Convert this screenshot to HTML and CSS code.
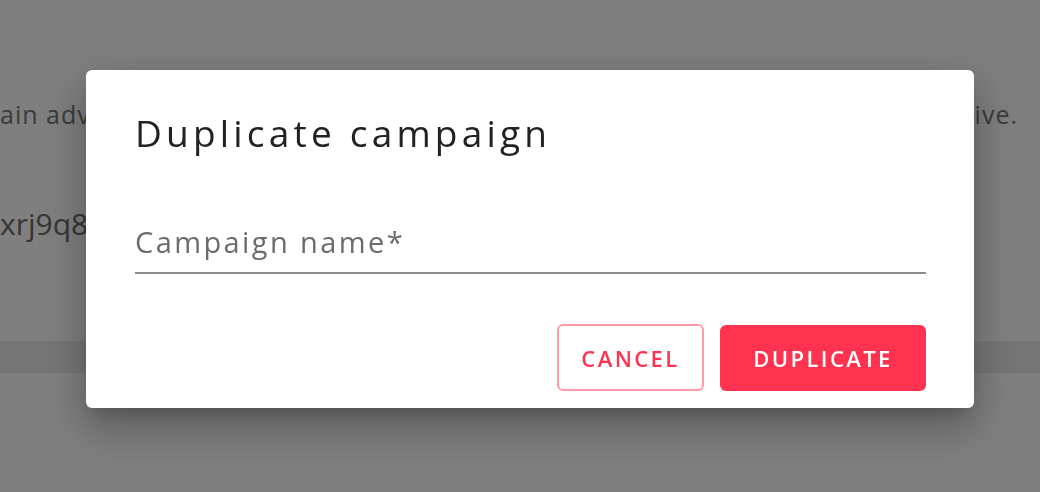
FILE: index.html
```html
<!DOCTYPE html>
<html lang="en">
<head>
<meta charset="utf-8">
<title>Duplicate campaign</title>
<link rel="stylesheet" href="styles.css">
</head>
<body>
<div class="page">
  <div class="row row-desc">
    <span>ain adv</span>
    <span>tive.</span>
  </div>
  <div class="row row-id">
    <span>xrj9q8</span>
  </div>
  <div class="band"></div>
</div>
<div class="overlay"></div>
<div class="dialog" role="dialog">
  <h2 class="dialog-title">Duplicate campaign</h2>
  <div class="field">
    <label class="field-label">Campaign name*</label>
    <div class="field-line"></div>
  </div>
  <div class="actions">
    <button class="btn btn-outline">CANCEL</button>
    <button class="btn btn-fill">DUPLICATE</button>
  </div>
</div>
</body>
</html>
```
FILE: styles.css
```css
* { box-sizing: border-box; }
html, body {
  margin: 0;
  padding: 0;
  width: 1040px;
  height: 492px;
  overflow: hidden;
  background: #ffffff;
  font-family: "Open Sans", "Noto Sans", sans-serif;
}
.page {
  padding-top: 94px;
}
.row {
  display: flex;
  justify-content: space-between;
  color: #777;
}
.row-desc {
  font-size: 25px;
  line-height: 40px;
  padding-right: 22px;
  letter-spacing: 1px;
}
.row-id {
  margin-top: 68px;
  font-size: 30px;
  line-height: 44px;
  color: #6c6c6c;
}
.band {
  margin-top: 95px;
  height: 32px;
  background: #ededed;
}
.overlay {
  position: fixed;
  inset: 0;
  background: rgba(0, 0, 0, 0.5);
}
.dialog {
  position: absolute;
  left: 86px;
  top: 70px;
  width: 888px;
  height: 338px;
  background: #fff;
  border-radius: 6px;
  padding: 0 48px 0 49px;
  box-shadow: 0 11px 15px -7px rgba(0,0,0,0.2), 0 24px 38px 3px rgba(0,0,0,0.14), 0 9px 46px 8px rgba(0,0,0,0.12);
  display: flex;
  flex-direction: column;
}
.dialog-title {
  margin: 0;
  padding-top: 33px;
  font-size: 37px;
  line-height: 60px;
  font-weight: 500;
  color: #222;
  letter-spacing: 4.2px;
}
.field {
  margin-top: 59px;
}
.field-label {
  display: block;
  font-size: 29px;
  line-height: 40px;
  color: #6b6b6b;
  letter-spacing: 2.4px;
}
.field-line {
  margin-top: 10px;
  height: 2px;
  background: #8c8c8c;
}
.actions {
  margin-top: 50px;
  display: flex;
  justify-content: flex-end;
  align-items: flex-end;
  gap: 16px;
}
.btn {
  font-family: inherit;
  font-size: 22px;
  font-weight: 600;
  letter-spacing: 2.4px;
  border-radius: 6px;
  cursor: pointer;
  padding: 0;
}
.btn-outline {
  width: 147px;
  height: 67px;
  background: #fff;
  color: #ff3350;
  border: 2px solid #ff9aa6;
}
.btn-fill {
  width: 206px;
  height: 66px;
  background: #ff3350;
  color: #fff;
  border: none;
}
```
